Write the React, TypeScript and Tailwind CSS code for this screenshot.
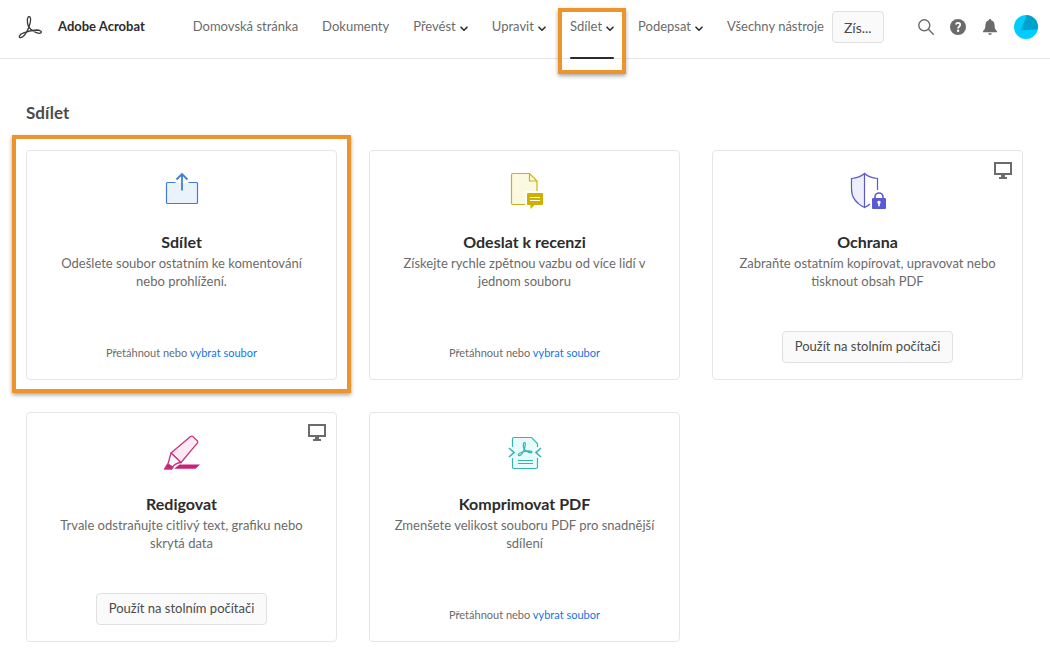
import React from 'react';

interface Tool {
    id: string;
    title: string;
    description: string;
    icon: React.ReactNode;
    desktopOnly?: boolean;
    highlighted?: boolean;
}

interface NavItem {
    label: string;
    hasMenu?: boolean;
    active?: boolean;
}

const NAV_ITEMS: NavItem[] = [
    { label: 'Domovská stránka' },
    { label: 'Dokumenty' },
    { label: 'Převést', hasMenu: true },
    { label: 'Upravit', hasMenu: true },
    { label: 'Sdílet', hasMenu: true, active: true },
    { label: 'Podepsat', hasMenu: true },
    { label: 'Všechny nástroje' },
];

const ACROBAT_PATH =
    'M10.4 11.2C9 7.6 8.8 2 11 1.7C13.4 1.6 12.7 6.6 11.3 11C9.3 17 5.4 22.6 2.6 22.6C0.2 22.5 1.4 19.6 5 18.2C9 16.4 14 15.2 18.5 15C22.5 15 24 16.6 23 17.8C21.4 19.4 15.6 16.8 12.8 14.2C11.6 13 10.9 12.2 10.4 11.2Z';

const AcrobatLogo: React.FC = () => (
    <svg className="w-6 h-6 flex-shrink-0" viewBox="0 0 24 24" fill="none" stroke="#3c3c3c" strokeWidth={1.3} aria-hidden="true">
        <path d={ACROBAT_PATH} />
    </svg>
);

const Chevron: React.FC = () => (
    <svg className="w-2 h-2 mt-1" viewBox="0 0 8 8" fill="none" stroke="#2c2c2c" strokeWidth={1.6} strokeLinecap="round" strokeLinejoin="round" aria-hidden="true">
        <path d="M1 2.2L4 5.2L7 2.2" />
    </svg>
);

const MonitorIcon: React.FC = () => (
    <svg className="absolute top-[11px] right-[10px] w-[18px] h-[17px]" viewBox="0 0 18 17" fill="none" aria-hidden="true">
        <rect x="1" y="1" width="16" height="11" stroke="#6b6b6b" strokeWidth={2} />
        <path d="M7 13h4v2h2v2H5v-2h2z" fill="#6b6b6b" />
    </svg>
);

const ShareIcon: React.FC = () => (
    <svg className="w-10 h-10" viewBox="0 0 40 40" fill="none" stroke="#3f7fd0" aria-hidden="true">
        <path d="M4.5 11.5h31v21h-31z" fill="#eaf2fc" stroke="none" />
        <path d="M13.5 11.5H5.5a1 1 0 0 0-1 1v19a1 1 0 0 0 1 1h29a1 1 0 0 0 1-1v-19a1 1 0 0 0-1-1h-8" strokeWidth={1.2} />
        <path d="M20 19.5V3M14.5 8.5L20 3l5.5 5.5" strokeWidth={1.8} />
    </svg>
);

const ReviewIcon: React.FC = () => (
    <svg className="w-10 h-10" viewBox="0 0 40 40" fill="none" stroke="#cbb21a" strokeWidth={1.2} aria-hidden="true">
        <path d="M6.5 4a1.5 1.5 0 0 1 1.5-1.5h16.5l7.5 7.5v10H20v13.5H8A1.5 1.5 0 0 1 6.5 32z" fill="#fcf9e2" stroke="none" />
        <path d="M20 33.5H8A1.5 1.5 0 0 1 6.5 32V4A1.5 1.5 0 0 1 8 2.5h16.5l7.5 7.5v10M24.5 2.5V10H32" />
        <path d="M23 22h14a1 1 0 0 1 1 1v10a1 1 0 0 1-1 1h-7.5L25.5 38v-4H23a1 1 0 0 1-1-1V23a1 1 0 0 1 1-1z" fill="#cdb000" stroke="none" />
        <path d="M25 26.5h10M25 29.5h10" stroke="#fff" />
    </svg>
);

const ProtectIcon: React.FC = () => (
    <svg className="w-10 h-10" viewBox="0 0 40 40" fill="none" stroke="#5b59cf" strokeWidth={1.2} aria-hidden="true">
        <path d="M16.5 2.5C12.5 6 8 7 3.5 7.5V18C3.5 27 8 32.5 16.5 36.5z" fill="#efeffb" />
        <path d="M16.5 2.5C20.5 6 25 7 29.5 7.5V19M16.5 36.5c2-1 4-2 5.5-3.5" />
        <path d="M27 27.5V26a4 4 0 0 1 8 0v1.5" strokeWidth={1.6} />
        <rect x="24" y="27" width="14" height="11" rx="1" fill="#5b59d3" stroke="none" />
        <path d="M31 29.8a1.7 1.7 0 0 1 .8 3.2v2.2h-1.6V33a1.7 1.7 0 0 1 .8-3.2z" fill="#fff" stroke="none" />
    </svg>
);

const RedactIcon: React.FC = () => (
    <svg className="w-10 h-10" viewBox="0 0 40 40" fill="none" stroke="#c9357f" strokeWidth={1.3} strokeLinejoin="round" aria-hidden="true">
        <path d="M9 20L28.5 3.5Q29.8 2.7 31 3.6L35.5 8Q36.2 9 35.3 10.2L19 29.5z" fill="#fdeaf4" />
        <path d="M9 20L6 31L10.5 34.5C12 31.500 14.500 30 19 29.500z" fill="#fff" />
        <path d="M5.5 31L11 34L9.5 36H2.5z" fill="#c9207a" />
        <path d="M17.500 31.500H38L33.500 35.800H12z" fill="#c9207a" stroke="none" />
    </svg>
);

const CompressIcon: React.FC = () => (
    <svg className="w-10 h-10" viewBox="0 0 40 40" fill="none" stroke="#35b5ae" strokeWidth={1.2} aria-hidden="true">
        <path d="M9 4.5h17.5L32.5 10.5V34a1.5 1.5 0 0 1-1.5 1.5H9A1.5 1.5 0 0 1 7.5 34V6A1.5 1.5 0 0 1 9 4.5z" fill="#e8fafa" stroke="none" />
        <path d="M7.5 14V6A1.5 1.5 0 0 1 9 4.5h17.5L32.5 10.5V14M7.5 25v9A1.5 1.5 0 0 0 9 35.5h22a1.5 1.5 0 0 0 1.5-1.5v-9" />
        <path d="M4 15l5 4.5L4 24M36 15l-5 4.5L36 24" strokeWidth={1.6} />
        <path d="M13 27.5h15M13 30.5h15" />
        <g transform="translate(12.5 8.5) scale(.62)">
            <path d={ACROBAT_PATH} strokeWidth={2} />
        </g>
    </svg>
);

const TOOLS: Tool[] = [
    { id: 'share', title: 'Sdílet', description: 'Odešlete soubor ostatním ke komentování nebo prohlížení.', icon: <ShareIcon />, highlighted: true },
    { id: 'review', title: 'Odeslat k recenzi', description: 'Získejte rychle zpětnou vazbu od více lidí v jednom souboru', icon: <ReviewIcon /> },
    { id: 'protect', title: 'Ochrana', description: 'Zabraňte ostatním kopírovat, upravovat nebo tisknout obsah PDF', icon: <ProtectIcon />, desktopOnly: true },
    { id: 'redact', title: 'Redigovat', description: 'Trvale odstraňujte citlivý text, grafiku nebo skrytá data', icon: <RedactIcon />, desktopOnly: true },
    { id: 'compress', title: 'Komprimovat PDF', description: 'Zmenšete velikost souboru PDF pro snadnější sdílení', icon: <CompressIcon /> },
];

const NavEntry: React.FC<{ item: NavItem }> = ({ item }) => (
    <li className="relative flex items-center h-full pb-1">
        {item.hasMenu ? (
            <button type="button" className="flex items-center gap-1 whitespace-nowrap">
                {item.label}
                <Chevron />
            </button>
        ) : (
            <a href="#" className="whitespace-nowrap">{item.label}</a>
        )}
        {item.active && (
            <>
                <span className="absolute inset-x-0 -bottom-px h-[2px] rounded-full bg-[#2c2c2c]" />
                <span className="absolute -inset-x-3 top-2 -bottom-4 border-4 border-[#ee942c] shadow-[0_2px_4px_rgba(0,0,0,0.35)] pointer-events-none" />
            </>
        )}
    </li>
);

const Header: React.FC = () => (
    <header className="flex items-center h-[59px] pl-[18px] pr-3 border-b border-[#e6e6e6]">
        <a href="#" className="flex items-center gap-4 mr-12 pb-1 whitespace-nowrap text-[13px] font-bold text-[#2c2c2c]">
            <AcrobatLogo />
            Adobe Acrobat
        </a>
        <nav className="h-full">
            <ul className="flex h-full gap-6 text-[13px] text-[#6b6b6b]">
                {NAV_ITEMS.map(item => (
                    <NavEntry key={item.label} item={item} />
                ))}
            </ul>
        </nav>
        <button type="button" className="h-8 ml-2 mb-1 px-[11px] rounded border border-[#e1e1e1] bg-[#fafafa] text-[14px] text-[#4b4b4b]">
            Zís...
        </button>
        <div className="flex items-center gap-4 ml-auto pb-1">
            <button type="button" aria-label="Hledat">
                <svg className="w-4 h-4" viewBox="0 0 16 16" fill="none" stroke="#6b6b6b" strokeWidth={1.4} strokeLinecap="round">
                    <circle cx="6.3" cy="6.3" r="5.5" />
                    <path d="M10.3 10.3L15.3 15.3" />
                </svg>
            </button>
            <button type="button" aria-label="Nápověda">
                <svg className="w-4 h-4" viewBox="0 0 16 16" fill="none">
                    <circle cx="8" cy="8" r="8" fill="#6b6b6b" />
                    <path d="M5.8 5.6C6.2 4.3 7 3.9 8 3.9C9.3 3.9 10.2 4.6 10.2 5.8C10.2 7.5 8.1 7.5 8.1 9.5" stroke="#fff" strokeWidth={1.8} />
                    <circle cx="8.1" cy="11.8" r="1.2" fill="#fff" />
                </svg>
            </button>
            <button type="button" aria-label="Oznámení">
                <svg className="w-4 h-4" viewBox="0 0 16 16" fill="#6b6b6b">
                    <path d="M8 0a1.2 1.2 0 0 1 1.2 1.3C11.8 2 12.6 4 12.6 6.5C12.6 10 14 10.8 15 12.2V13.2H1V12.2C2 10.8 3.4 10 3.4 6.5C3.4 4 4.2 2 6.8 1.3A1.2 1.2 0 0 1 8 0zM6.2 14.2h3.6a1.8 1.8 0 0 1-3.6 0z" />
                </svg>
            </button>
            <button type="button" aria-label="Účet">
                <svg className="w-6 h-6" viewBox="0 0 24 24">
                    <circle cx="12" cy="12" r="12" fill="#00cdff" />
                    <path d="M7 15.2L12.8 0A12 12 0 0 1 23.7 14.5z" fill="#00a2cb" />
                </svg>
            </button>
        </div>
    </header>
);

const ToolCard: React.FC<{ tool: Tool }> = ({ tool }) => (
    <article className="relative flex flex-col items-center h-[230px] pt-5 pb-4 px-6 rounded border border-[#e6e6e6] text-center">
        {tool.desktopOnly && <MonitorIcon />}
        {tool.icon}
        <h2 className="mt-[19px] text-[16px] leading-6 font-bold text-[#2c2c2c]">{tool.title}</h2>
        <p className="text-[13px] leading-[18px] text-[#6b6b6b]">{tool.description}</p>
        {tool.desktopOnly ? (
            <button type="button" className="h-8 mt-auto px-3 rounded border border-[#e1e1e1] bg-[#fafafa] text-[13px] text-[#4b4b4b]">
                Použít na stolním počítači
            </button>
        ) : (
            <p className="mt-auto text-[11px] leading-5 text-[#6b6b6b]">
                Přetáhnout nebo <a href="#" className="text-[#1473e6]">vybrat soubor</a>
            </p>
        )}
        {tool.highlighted && (
            <span className="absolute -inset-x-[15px] -top-4 -bottom-[14px] border-4 border-[#ee942c] shadow-[0_2px_4px_rgba(0,0,0,0.35)] pointer-events-none" />
        )}
    </article>
);

const App: React.FC = () => (
    <div className="min-h-screen bg-white font-['Lato',sans-serif]">
        <Header />
        <main className="pl-[26px] pr-[27px] pt-10 pb-6">
            <h1 className="mb-[23px] text-[17px] leading-7 font-bold text-[#4b4b4b]">Sdílet</h1>
            <div className="grid grid-cols-3 gap-8">
                {TOOLS.map(tool => (
                    <ToolCard key={tool.id} tool={tool} />
                ))}
            </div>
        </main>
    </div>
);

export default App;
